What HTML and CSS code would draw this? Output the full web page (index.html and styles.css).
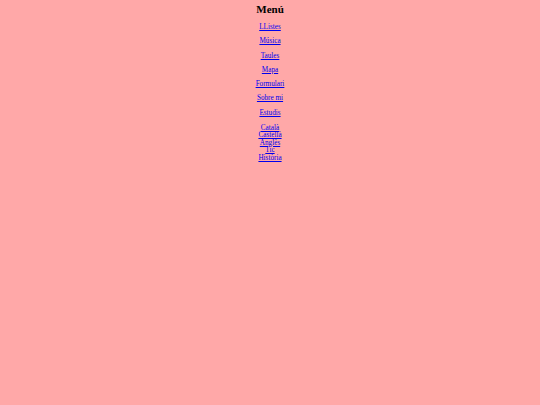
FILE: index.html
```html
<!DOCTYPE html>
<html lang="ca">
<head>
<meta charset="utf-8">
<title>Menú</title>
<link rel="stylesheet" href="styles.css">
</head>
<body>
<div class="menu">
  <h2 class="title">Menú</h2>
  <p class="item"><a href="#">LListes</a></p>
  <p class="item"><a href="#">Música</a></p>
  <p class="item"><a href="#">Taules</a></p>
  <p class="item"><a href="#">Mapa</a></p>
  <p class="item"><a href="#">Formulari</a></p>
  <p class="item"><a href="#">Sobre mi</a></p>
  <p class="item"><a href="#">Estudis</a></p>
  <div class="sub">
    <a href="#">Català</a><br>
    <a href="#">Castellà</a><br>
    <a href="#">Anglès</a><br>
    <a href="#">Tic</a><br>
    <a href="#">Història</a>
  </div>
</div>
</body>
</html>
```
FILE: styles.css
```css
html, body {
  margin: 0;
  background: #ffa8a8;
}
body {
  font-family: "Liberation Serif", "Times New Roman", serif;
  font-size: 7.2px;
  line-height: 7.6px;
  padding: 3px;
}
.menu {
  text-align: center;
}
.title {
  font-size: 11px;
  line-height: 12px;
  font-weight: bold;
  margin: 0 0 9px;
}
.item {
  margin: 0 0 6.7px;
}
a {
  color: #0000ee;
}
.sub {
  margin-top: 7.5px;
  line-height: 7.5px;
}
```
